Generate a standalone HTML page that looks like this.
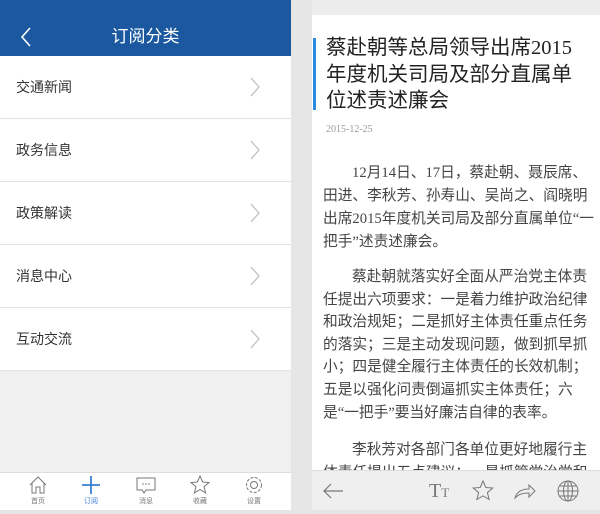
<!DOCTYPE html>
<html><head><meta charset="utf-8"><style>
*{margin:0;padding:0;box-sizing:border-box}
body{width:600px;height:514px;background:#e6e6e6;font-family:"Liberation Sans","Noto Sans CJK SC",sans-serif;position:relative;overflow:hidden}
#L{position:absolute;left:0;top:0;width:291px;height:510px;background:#f0f0f0}
#hd{position:absolute;left:0;top:0;width:291px;height:56px;background:#1b589f;color:#fff;font-size:17px;text-align:center;line-height:74px}
.row{position:absolute;left:0;width:291px;height:63px;background:#fff;border-bottom:1px solid #e2e2e2;font-size:14px;color:#333;padding-left:16px;line-height:63px}
.row svg{position:absolute;right:30px;top:21px}
#tab{position:absolute;left:0;top:472px;width:291px;height:38px;background:#fff;border-top:1px solid #ddd}
.t{position:absolute;top:2px;width:40px;text-align:center;font-size:7px;color:#777}
.t svg{display:block;margin:0 auto 1px}
#R{position:absolute;left:312px;top:0;width:288px;height:510px;background:#fff}
#R .top{position:absolute;left:0;top:0;width:288px;height:15px;background:#ececec}
#bar{position:absolute;left:1px;top:38px;width:3px;height:72px;background:#2a8be0}
#ti{position:absolute;left:14px;top:35px;white-space:nowrap;font-family:"Liberation Serif","Noto Sans CJK SC",serif;font-size:20.5px;line-height:26.5px;color:#222}
#dt{position:absolute;left:14px;top:124px;font-family:"Liberation Serif",serif;font-size:10px;color:#999}
.p{position:absolute;left:11px;white-space:nowrap;font-family:"Liberation Serif","Noto Sans CJK SC",serif;font-size:14.7px;line-height:23px;color:#444}
.p i{font-style:normal;display:inline-block;width:29px}
#tb{position:absolute;left:312px;top:470px;width:288px;height:40px;background:#efefef;border-top:1px solid #ddd}
</style></head><body>
<div id="L">
<div id="hd"><svg style="position:absolute;left:20px;top:27px" width="12" height="20" viewBox="0 0 12 20"><path d="M10 1L2 10l8 9" fill="none" stroke="#fff" stroke-width="1.6"/></svg>订阅分类</div>
<div class="row" style="top:56px">交通新闻<svg width="12" height="20"><path d="M2 1l8 9-8 9" fill="none" stroke="#bbb" stroke-width="1.2"/></svg></div>
<div class="row" style="top:119px">政务信息<svg width="12" height="20"><path d="M2 1l8 9-8 9" fill="none" stroke="#bbb" stroke-width="1.2"/></svg></div>
<div class="row" style="top:182px">政策解读<svg width="12" height="20"><path d="M2 1l8 9-8 9" fill="none" stroke="#bbb" stroke-width="1.2"/></svg></div>
<div class="row" style="top:245px">消息中心<svg width="12" height="20"><path d="M2 1l8 9-8 9" fill="none" stroke="#bbb" stroke-width="1.2"/></svg></div>
<div class="row" style="top:308px">互动交流<svg width="12" height="20"><path d="M2 1l8 9-8 9" fill="none" stroke="#bbb" stroke-width="1.2"/></svg></div>
<div id="tab">
<div class="t" style="left:18px"><svg width="20" height="20"><path d="M2 10L10 2l8 8M4 8v10h4v-6h4v6h4V8" fill="none" stroke="#777" stroke-width="1"/></svg>首页</div>
<div class="t" style="left:71px;color:#3a7fd5"><svg width="20" height="20"><path d="M10 1v18M1 10h18" stroke="#3a7fd5" stroke-width="1.8"/></svg>订阅</div>
<div class="t" style="left:126px"><svg width="22" height="20"><path d="M2 3h18v12H11l-2 3-2-3H2z" fill="none" stroke="#777" stroke-width="1"/><circle cx="8" cy="9" r=".8" fill="#777"/><circle cx="11" cy="9" r=".8" fill="#777"/><circle cx="14" cy="9" r=".8" fill="#777"/></svg>消息</div>
<div class="t" style="left:180px"><svg width="20" height="20"><path d="M10 1l2.6 6 6.4.5-5 4.2 1.6 6.3L10 14.6 4.4 18l1.6-6.3-5-4.2 6.4-.5z" fill="none" stroke="#777" stroke-width="1"/></svg>收藏</div>
<div class="t" style="left:234px"><svg width="20" height="20"><circle cx="10" cy="10" r="3.5" fill="none" stroke="#777"/><circle cx="10" cy="10" r="7.5" fill="none" stroke="#777" stroke-dasharray="3 1.5"/></svg>设置</div>
</div>
</div>
<div id="R">
<div class="top"></div>
<div id="bar"></div>
<div id="ti">蔡赴朝等总局领导出席2015<br>年度机关司局及部分直属单<br>位述责述廉会</div>
<div id="dt">2015-12-25</div>
<div class="p" style="top:162px"><i></i>12月14日、17日，蔡赴朝、聂辰席、<br>田进、李秋芳、孙寿山、吴尚之、阎晓明<br>出席2015年度机关司局及部分直属单位“一<br>把手”述责述廉会。</div>
<div class="p" style="top:266px;line-height:22.6px"><i></i>蔡赴朝就落实好全面从严治党主体责<br>任提出六项要求：一是着力维护政治纪律<br>和政治规矩；二是抓好主体责任重点任务<br>的落实；三是主动发现问题，做到抓早抓<br>小；四是健全履行主体责任的长效机制；<br>五是以强化问责倒逼抓实主体责任；六<br>是“一把手”要当好廉洁自律的表率。</div>
<div class="p" style="top:439px"><i></i>李秋芳对各部门各单位更好地履行主<br>体责任提出五点建议：一是抓管党治党和</div>
</div>
<div id="tb">
<svg style="position:absolute;left:10px;top:10px" width="22" height="20"><path d="M21 10H2M9 3L2 10l7 7" fill="none" stroke="#777" stroke-width="1.2"/></svg>
<div style="position:absolute;left:117px;top:9px;font-family:'Liberation Serif',serif;color:#777;font-size:20px">T<span style="font-size:13px">T</span></div>
<svg style="position:absolute;left:160px;top:9px" width="22" height="22"><path d="M11 1l2.8 6.5 7 .5-5.4 4.6 1.7 6.9L11 15.8 4.9 19.5l1.7-6.9L1.2 8l7-.5z" fill="none" stroke="#777" stroke-width="1"/></svg>
<svg style="position:absolute;left:201px;top:10px" width="24" height="20"><path d="M2 17c2-7 8-9 14-9V4l6 6-6 6v-4c-6 0-10 1-14 5z" fill="none" stroke="#777" stroke-width="1"/></svg>
<svg style="position:absolute;left:244px;top:8px" width="24" height="24"><circle cx="12" cy="12" r="10" fill="none" stroke="#777"/><ellipse cx="12" cy="12" rx="4.5" ry="10" fill="none" stroke="#777"/><path d="M12 2v20M2 12h20M4 7h16M4 17h16" stroke="#777" stroke-width="1"/></svg>
</div>
</body></html>
